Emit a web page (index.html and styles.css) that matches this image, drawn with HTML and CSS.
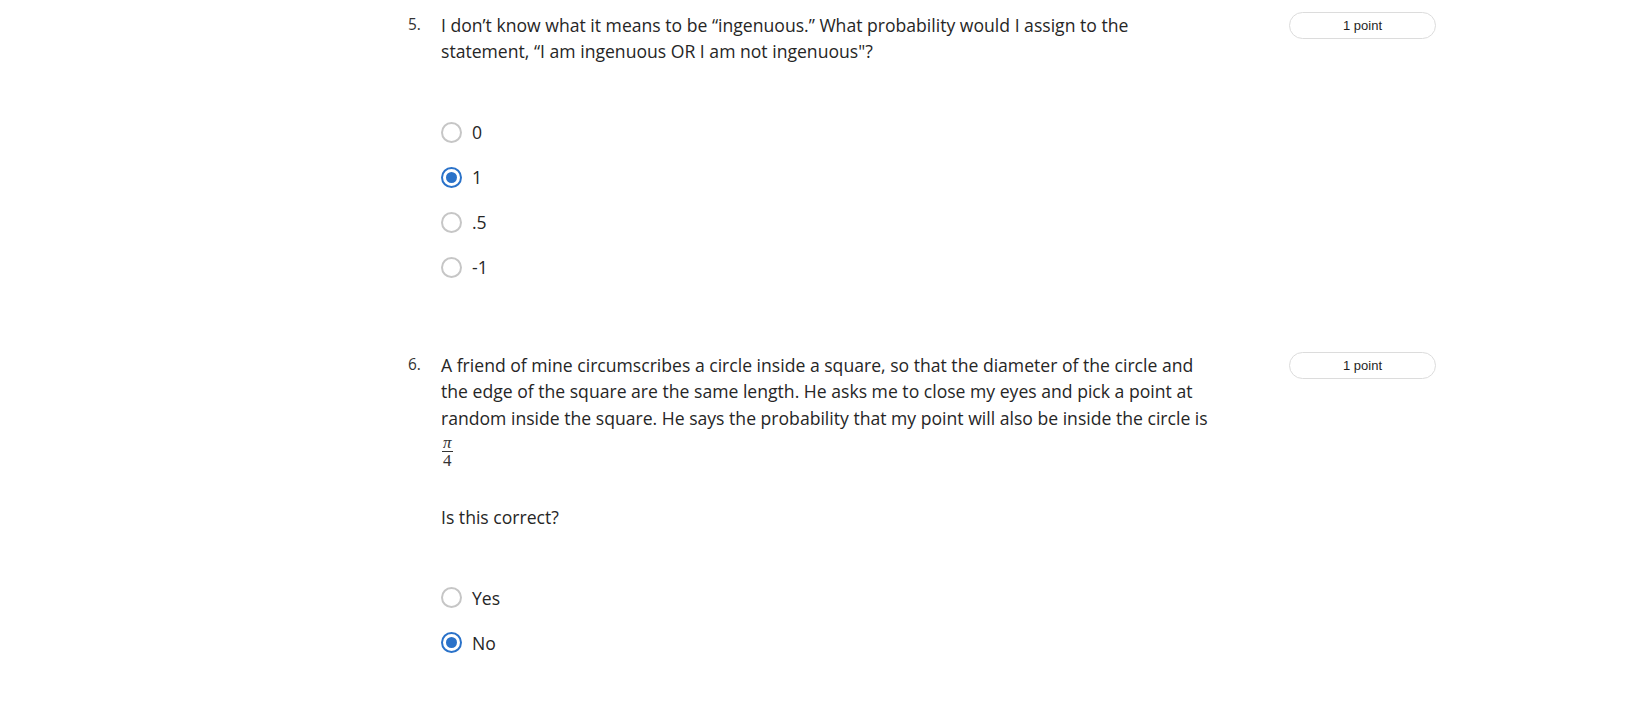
FILE: index.html
```html
<!DOCTYPE html>
<html lang="en">
<head>
<meta charset="utf-8">
<title>Quiz</title>
<link rel="stylesheet" href="styles.css">
</head>
<body>
<main class="quiz">
  <section class="question q5">
    <div class="qnum">5.</div>
    <div class="qbody">
      <p class="qtext">I don’t know what it means to be “ingenuous.” What probability would I assign to the statement, “I am ingenuous OR I am not ingenuous"?</p>
      <div class="options">
        <label class="option"><span class="radio"></span><span class="olabel">0</span></label>
        <label class="option"><span class="radio checked"></span><span class="olabel">1</span></label>
        <label class="option"><span class="radio"></span><span class="olabel">.5</span></label>
        <label class="option"><span class="radio"></span><span class="olabel">-1</span></label>
      </div>
    </div>
    <div class="points">1 point</div>
  </section>

  <section class="question q6">
    <div class="qnum">6.</div>
    <div class="qbody">
      <p class="qtext">A friend of mine circumscribes a circle inside a square, so that the diameter of the circle and the edge of the square are the same length. He asks me to close my eyes and pick a point at random inside the square. He says the probability that my point will also be inside the circle is</p>
      <div class="frac"><span class="num">π</span><span class="den">4</span></div>
      <p class="qtext follow">Is this correct?</p>
      <div class="options">
        <label class="option"><span class="radio"></span><span class="olabel">Yes</span></label>
        <label class="option"><span class="radio checked"></span><span class="olabel">No</span></label>
      </div>
    </div>
    <div class="points">1 point</div>
  </section>
</main>
</body>
</html>
```

FILE: styles.css
```css
* { box-sizing: border-box; }
html, body { margin: 0; padding: 0; background: #fff; }
body {
  font-family: "Open Sans", "Noto Sans", sans-serif;
  color: #262626;
  width: 1644px;
  height: 706px;
  overflow: hidden;
}
.quiz {
  padding: 12px 0 0 408px;
  width: 1436px;
}
.question {
  display: grid;
  grid-template-columns: 33px 776px 1fr 147px;
  align-items: start;
}
.q6 { margin-top: 62px; }
.qnum {
  font-size: 15.4px;
  line-height: 26.4px;
  color: #333;
}
.qbody { grid-column: 2; }
.points {
  grid-column: 4;
  height: 27px;
  border: 1px solid #dcdcdc;
  border-radius: 14px;
  font-family: "Liberation Sans", Arial, sans-serif;
  font-size: 13px;
  line-height: 25px;
  text-align: center;
  color: #1f1f1f;
}
.qtext {
  margin: 0;
  font-size: 17.6px;
  line-height: 26.4px;
}
.options { display: flex; flex-direction: column; margin-top: 45px; }
.option {
  display: flex;
  align-items: center;
  height: 45px;
  gap: 10px;
}
.radio {
  width: 21px;
  height: 21px;
  border-radius: 50%;
  border: 2px solid #c6c6c6;
  display: flex;
  align-items: center;
  justify-content: center;
  flex: none;
}
.radio.checked { border-color: #2a72c9; }
.radio.checked::after {
  content: "";
  width: 11px;
  height: 11px;
  border-radius: 50%;
  background: #2a72c9;
}
.olabel { font-size: 17.6px; line-height: 26px; }
.frac {
  display: inline-flex;
  flex-direction: column;
  align-items: center;
  font-family: "Liberation Serif", "DejaVu Serif", serif;
  font-size: 17px;
  line-height: 15px;
  padding: 0 1px 0;
  color: #333;
}
.frac .num { border-bottom: 1px solid #333; padding: 0 1px 1px; font-style: italic; }
.frac .den { padding-top: 1px; }
.follow { margin-top: 36px; }
```
